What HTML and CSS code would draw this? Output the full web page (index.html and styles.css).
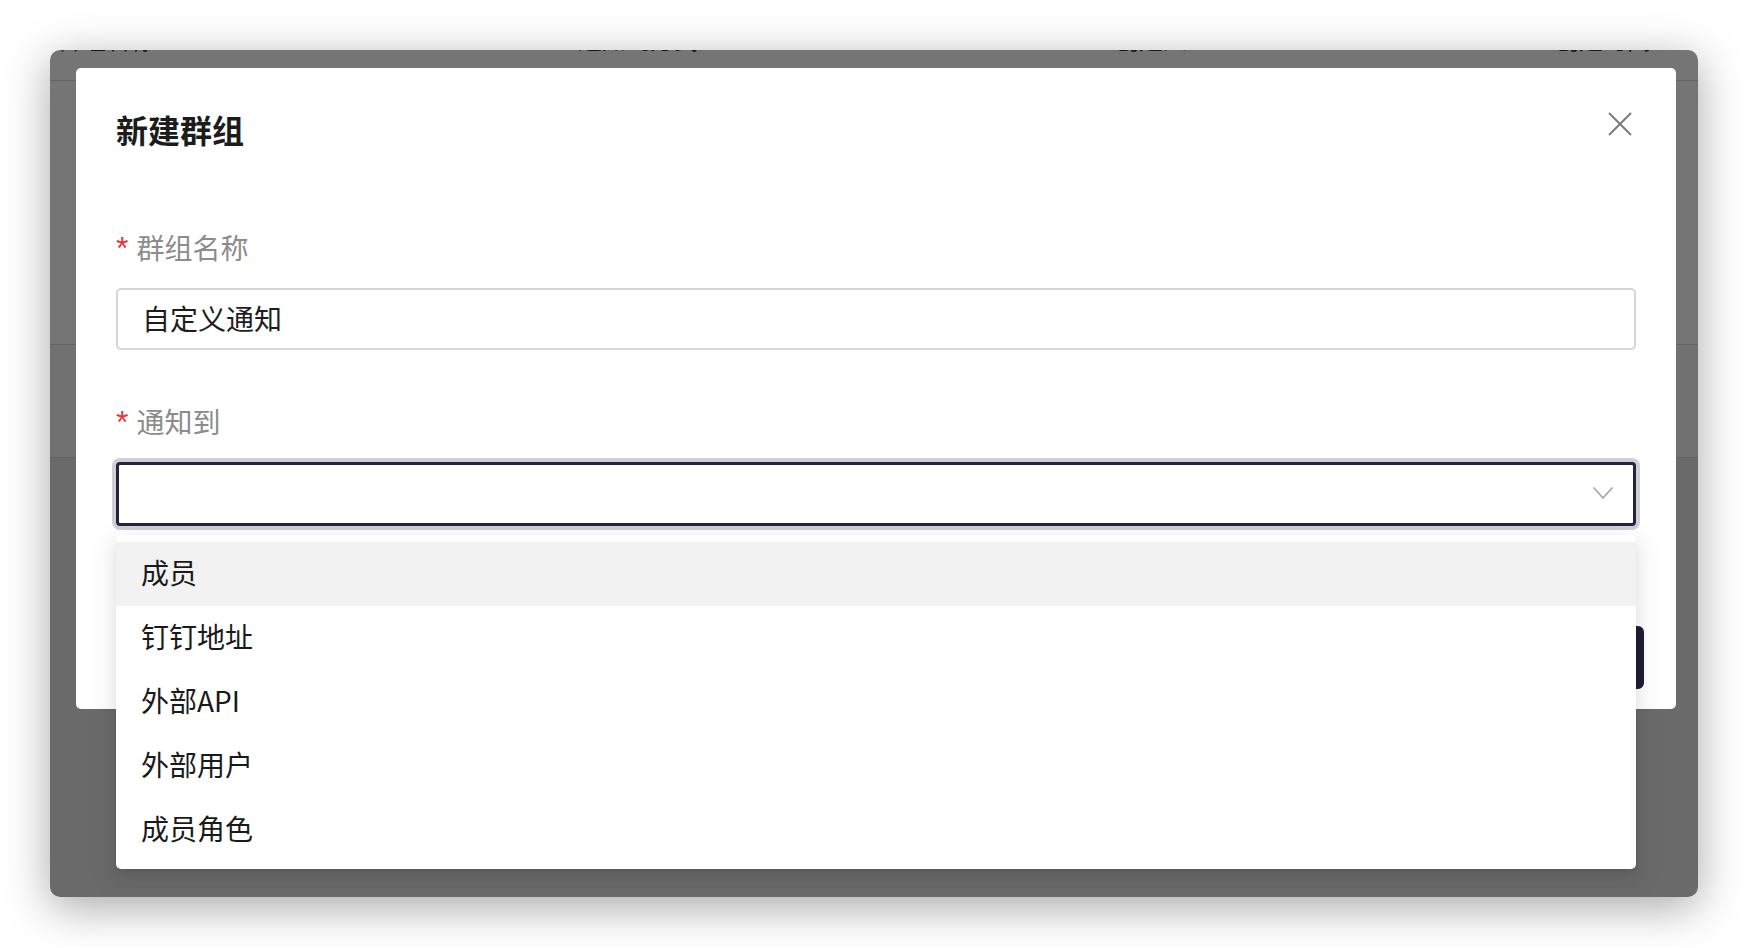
FILE: index.html
```html
<!DOCTYPE html>
<html lang="zh-CN">

<head>
    <meta charset="UTF-8">
    <title>新建群组</title>
    <link rel="stylesheet" href="styles.css">
</head>

<body>
    <div class="window">
        <!-- page behind the mask -->
        <div class="page">
            <div class="thead">
                <span>群组名称</span>
                <span>通知到方式</span>
                <span>创建人</span>
                <span>创建时间</span>
            </div>
            <div class="row row-one"></div>
            <div class="row row-two"></div>
            <div class="row row-three"></div>
        </div>

        <div class="mask">
            <div class="modal">
                <div class="modal-head">
                    <h2>新建群组</h2>
                </div>
                <button class="close" aria-label="关闭">
                    <svg width="24" height="24" viewBox="0 0 24 24">
                        <path d="M1 1 L23 23 M23 1 L1 23" stroke="#7b7b7b" stroke-width="2" fill="none" />
                    </svg>
                </button>

                <form class="form">
                    <div class="field">
                        <label><span class="req">*</span>群组名称</label>
                        <div class="input">自定义通知</div>
                    </div>

                    <div class="field field-select">
                        <label><span class="req">*</span>通知到</label>
                        <div class="select-wrap">
                            <div class="select">
                                <svg class="arrow" width="22" height="14" viewBox="0 0 22 14">
                                    <polyline points="1.5,1.5 11,12 20.5,1.5" stroke="#a8a8a8" stroke-width="1.8" fill="none" />
                                </svg>
                            </div>
                            <ul class="dropdown">
                                <li class="active">成员</li>
                                <li>钉钉地址</li>
                                <li>外部API</li>
                                <li>外部用户</li>
                                <li>成员角色</li>
                            </ul>
                        </div>
                    </div>

                    <div class="footer">
                        <button type="button" class="btn">取消</button>
                        <button type="button" class="btn btn-primary">确定</button>
                    </div>
                </form>
            </div>
        </div>
    </div>
</body>

</html>
```

FILE: styles.css
```css
* {
    box-sizing: border-box;
}

body {
    margin: 0;
    background-color: #ffffff;
    font-family: "Noto Sans CJK SC", "Noto Sans", sans-serif;
    color: #222222;
}

.window {
    position: relative;
    width: 1648px;
    height: 847px;
    margin: 50px;
    border-radius: 10px;
    overflow: hidden;
    box-shadow: 0 10px 45px rgba(0, 0, 0, 0.35);
}

/* table behind */
.page {
    background-color: #ffffff;
    height: 100%;
}

.thead {
    height: 30px;
    display: grid;
    grid-template-columns: 520px 537px 440px 1fr;
    padding-left: 8px;
    font-size: 24px;
    color: #333333;
}

.thead span {
    line-height: 28px;
    margin-top: -25px;
}

.row {
    border-top: 1px solid #dadada;
}

.row-one {
    height: 264px;
    background-color: #ffffff;
}

.row-two {
    height: 113px;
    background-color: #f7f7f7;
}

.row-three {
    height: 440px;
    background-color: #e6e6e6;
}

.mask {
    position: absolute;
    top: 0;
    left: 0;
    right: 0;
    bottom: 0;
    background-color: rgba(0, 0, 0, 0.54);
    padding: 18px 22px 0 26px;
}

.modal {
    position: relative;
    background-color: #ffffff;
    border-radius: 5px;
    padding: 0 40px 20px 40px;
}

.modal-head {
    padding-top: 39px;
}

.modal-head h2 {
    margin: 0;
    font-size: 32px;
    line-height: 44px;
    font-weight: 700;
    color: #1c1c1c;
}

.close {
    position: absolute;
    top: 44px;
    right: 44px;
    width: 24px;
    height: 24px;
    padding: 0;
    border: none;
    background: none;
}

.close svg {
    display: block;
}

.form {
    padding-top: 77px;
}

.field {
    margin-bottom: 52px;
}

.field label {
    display: block;
    height: 40px;
    font-size: 28px;
    line-height: 38px;
    margin-bottom: 20px;
    color: #8c8c8c;
}

.req {
    color: #e8343a;
    margin-right: 8px;
    font-family: "Liberation Sans", sans-serif;
    font-size: 32px;
    line-height: 1;
}

.input {
    height: 62px;
    border: 2px solid #d6d6d6;
    border-radius: 5px;
    padding: 0 24px;
    font-size: 28px;
    line-height: 56px;
    color: #1e1e1e;
}

.field-select {
    margin-bottom: 0;
}

.select-wrap {
    position: relative;
}

.select {
    height: 64px;
    border: 3px solid #26243a;
    border-radius: 4px;
    box-shadow: 0 0 0 4px #cfcfd7;
    background-color: #ffffff;
    display: flex;
    align-items: center;
    justify-content: flex-end;
    padding-right: 19px;
}

.arrow {
    display: block;
    margin-top: -2px;
}

.dropdown {
    position: absolute;
    top: calc(100% + 9px);
    left: 0;
    right: 0;
    z-index: 2;
    margin: 0;
    padding: 7px 0;
    list-style: none;
    background-color: #ffffff;
    border-radius: 5px;
    box-shadow: 0 6px 16px 0 rgba(0, 0, 0, 0.08), 0 3px 6px -4px rgba(0, 0, 0, 0.12), 0 9px 28px 8px rgba(0, 0, 0, 0.05);
}

.dropdown li {
    height: 64px;
    line-height: 61px;
    padding-left: 25px;
    font-size: 28px;
    color: #1a1a1a;
}

.dropdown li.active {
    background-color: #f2f2f2;
}

.footer {
    margin-top: 100px;
    margin-right: -8px;
    display: flex;
    justify-content: flex-end;
    gap: 16px;
}

.btn {
    height: 63px;
    padding: 0 36px;
    font-family: "Noto Sans CJK SC", sans-serif;
    font-size: 26px;
    border: 2px solid #d6d6d6;
    border-radius: 6px;
    background-color: #ffffff;
    color: #333333;
}

.btn-primary {
    background-color: #1f1c37;
    border-color: #1f1c37;
    color: #ffffff;
}
```
